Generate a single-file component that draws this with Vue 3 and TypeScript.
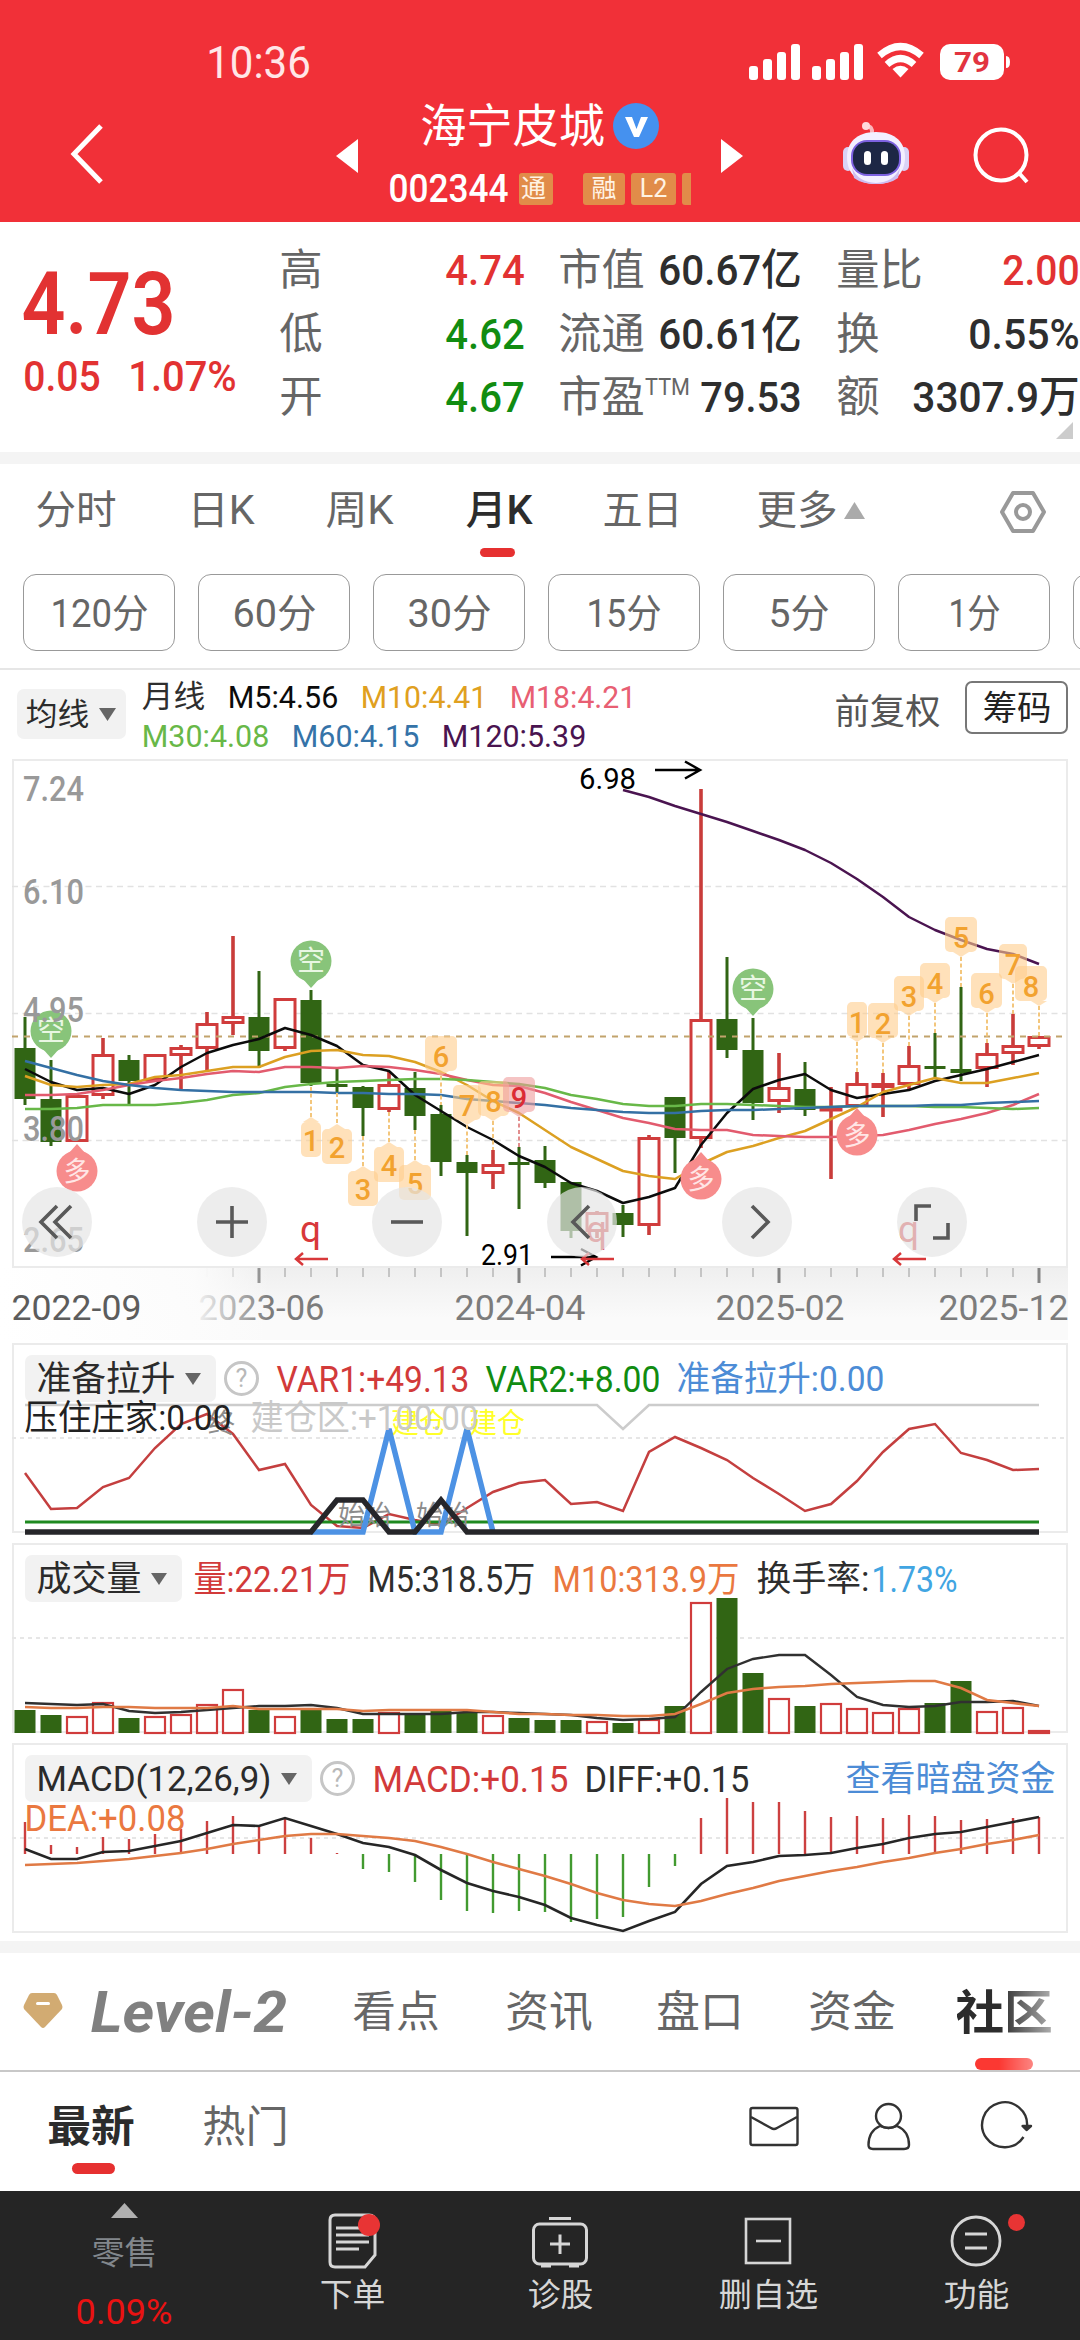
<script setup lang="ts">
import { h, type FunctionalComponent } from 'vue'

/* A line of real text set to a known width: s = font size, w = width of the ink */
const Fit: FunctionalComponent<{ t: string; w: number; s: number }> = (p) => {
  const lh = Math.round(p.s * 1.1)
  return h('svg', { class: 'fit', width: p.w, height: lh }, [
    h(
      'text',
      {
        x: -p.s * 0.04,
        y: lh / 2 + p.s * 0.36,
        'font-size': p.s,
        textLength: p.w + p.s * 0.08,
        lengthAdjust: 'spacingAndGlyphs',
        fill: 'currentColor',
      },
      p.t,
    ),
  ])
}
Fit.props = ['t', 'w', 's']

const STEP = 26
const X = (i: number) => 25 + STEP * i
const line = (ys: number[], from = 0) => ys.map((y, i) => `${X(i + from)},${y}`).join(' ')

const stats = [
  { a: '高', v: '4.74', c: 'red', b: '市值', bv: '60.67亿', bw: 140, d: '量比', dw: 83, dv: '2.00', dvw: 74, dc: 'red' },
  { a: '低', v: '4.62', c: 'green', b: '流通', bv: '60.61亿', bw: 140, d: '换', dw: 40, dv: '0.55%', dvw: 108, dc: 'dark' },
  { a: '开', v: '4.67', c: 'green', b: '市盈', bv: '79.53', bw: 98, d: '额', dw: 40, dv: '3307.9万', dvw: 164, dc: 'dark' },
]

const periods = [
  { t: '分时', w: 78 },
  { t: '日K', w: 64 },
  { t: '周K', w: 65 },
  { t: '月K', w: 64 },
  { t: '五日', w: 77 },
]
const minutes = [
  { t: '120分', w: 95 },
  { t: '60分', w: 81 },
  { t: '30分', w: 81 },
  { t: '15分', w: 72 },
  { t: '5分', w: 58 },
  { t: '1分', w: 49 },
]

/* wick top, wick bottom, body top, body bottom, rising */
type Candle = [number, number, number, number, 0 | 1]
const candles: Candle[] = [
  [1017, 1105, 1048, 1099, 0], [1060, 1146, 1099, 1142, 0], [1095, 1142, 1095, 1142, 1], [1038, 1099, 1054, 1096, 1],
  [1055, 1104, 1060, 1081, 0], [1054, 1081, 1054, 1081, 1], [1045, 1090, 1047, 1056, 1], [1012, 1070, 1023, 1049, 1],
  [936, 1035, 1016, 1024, 1], [971, 1068, 1017, 1051, 0], [998, 1051, 998, 1049, 1], [990, 1086, 1000, 1083, 0],
  [1069, 1092, 1084, 1087, 0], [1086, 1136, 1087, 1108, 0], [1071, 1112, 1084, 1110, 1], [1072, 1130, 1088, 1116, 0],
  [1105, 1176, 1114, 1162, 0], [1155, 1236, 1162, 1173, 0], [1150, 1189, 1164, 1174, 1], [1147, 1209, 1162, 1165, 0],
  [1146, 1188, 1160, 1183, 0], [1182, 1238, 1182, 1231, 0], [1211, 1238, 1212, 1232, 1], [1205, 1237, 1213, 1225, 0],
  [1135, 1235, 1137, 1226, 1], [1097, 1173, 1097, 1138, 0], [789, 1148, 1019, 1139, 1], [957, 1058, 1019, 1050, 0],
  [1018, 1120, 1050, 1103, 0], [1053, 1113, 1087, 1102, 1], [1062, 1116, 1089, 1110, 0], [1087, 1179, 1108, 1111, 1],
  [1072, 1107, 1083, 1107, 1], [1073, 1117, 1083, 1088, 1], [1046, 1090, 1065, 1085, 1], [1033, 1077, 1066, 1069, 0],
  [987, 1081, 1069, 1073, 0], [1043, 1087, 1053, 1069, 1], [1014, 1065, 1045, 1054, 1], [1036, 1049, 1036, 1047, 1],
]

const averages = [
  { c: '#4a1450', p: line([790, 797, 806, 814, 822, 831, 840, 850, 863, 879, 897, 917, 930, 940, 949, 954, 964], 23) },
  { c: '#0c0c0c', p: line([1069, 1082, 1090, 1088, 1094, 1085, 1067, 1053, 1045, 1039, 1028, 1035, 1046, 1065, 1071, 1095, 1111, 1127, 1140, 1156, 1167, 1183, 1191, 1203, 1197, 1188, 1145, 1113, 1089, 1080, 1074, 1090, 1098, 1094, 1090, 1081, 1075, 1069, 1062, 1055]) },
  { c: '#dca022', p: line([1076, 1085, 1087, 1085, 1084, 1077, 1075, 1071, 1067, 1067, 1057, 1051, 1050, 1055, 1056, 1062, 1072, 1085, 1101, 1113, 1130, 1147, 1159, 1171, 1176, 1179, 1164, 1152, 1146, 1138, 1131, 1119, 1107, 1092, 1085, 1078, 1083, 1083, 1078, 1073]) },
  { c: '#e25b6e', p: line([1095, 1095, 1094, 1090, 1085, 1081, 1078, 1074, 1071, 1072, 1067, 1067, 1068, 1066, 1067, 1070, 1074, 1080, 1085, 1086, 1093, 1102, 1110, 1118, 1123, 1129, 1130, 1130, 1135, 1136, 1137, 1137, 1136, 1135, 1130, 1124, 1119, 1113, 1105, 1094]) },
  { c: '#68b848', p: line([1109, 1109, 1108, 1105, 1105, 1105, 1103, 1100, 1095, 1093, 1087, 1084, 1082, 1081, 1080, 1079, 1079, 1080, 1082, 1084, 1088, 1095, 1099, 1104, 1106, 1106, 1104, 1104, 1105, 1106, 1107, 1107, 1106, 1106, 1106, 1107, 1107, 1108, 1109, 1108]) },
  { c: '#3470a4', p: line([1061, 1068, 1075, 1081, 1085, 1088, 1090, 1091, 1092, 1092, 1092, 1092, 1093, 1093, 1094, 1094, 1095, 1099, 1101, 1103, 1105, 1108, 1110, 1112, 1113, 1113, 1111, 1110, 1110, 1109, 1108, 1107, 1106, 1106, 1106, 1105, 1105, 1103, 1102, 1101]) },
]

const priceLabels = [
  { t: '7.24', y: 801 },
  { t: '6.10', y: 904 },
  { t: '4.95', y: 1022 },
  { t: '3.80', y: 1141 },
  { t: '2.65', y: 1252 },
]

/* Sequence counters: n, box left, box right, box top, stem x, far end of the stem; up = arrow on top */
interface Tag { n: string; l: number; r: number; t: number; x: number; e: number; up?: boolean; hot?: boolean }
const tags: Tag[] = [
  { n: '1', l: 301, r: 321, t: 1122, x: 311, e: 1087, up: true },
  { n: '2', l: 322, r: 352, t: 1129, x: 337, e: 1093, up: true },
  { n: '3', l: 348, r: 378, t: 1171, x: 363, e: 1136, up: true },
  { n: '4', l: 374, r: 404, t: 1147, x: 389, e: 1112, up: true },
  { n: '5', l: 399, r: 431, t: 1165, x: 415, e: 1130, up: true },
  { n: '6', l: 425, r: 457, t: 1036, x: 441, e: 1105 },
  { n: '7', l: 453, r: 481, t: 1085, x: 467, e: 1155 },
  { n: '8', l: 478, r: 509, t: 1081, x: 493, e: 1150 },
  { n: '9', l: 503, r: 535, t: 1077, x: 519, e: 1147, hot: true },
  { n: '1', l: 847, r: 867, t: 1002, x: 857, e: 1072 },
  { n: '2', l: 868, r: 898, t: 1003, x: 883, e: 1073 },
  { n: '3', l: 894, r: 924, t: 976, x: 909, e: 1046 },
  { n: '4', l: 920, r: 950, t: 963, x: 935, e: 1033 },
  { n: '5', l: 945, r: 977, t: 917, x: 961, e: 987 },
  { n: '6', l: 971, r: 1002, t: 973, x: 987, e: 1043 },
  { n: '7', l: 999, r: 1027, t: 944, x: 1013, e: 1014 },
  { n: '8', l: 1015, r: 1047, t: 966, x: 1039, e: 1036 },
]
const tagArrow = (g: Tag) =>
  g.up ? `M${g.x - 8} ${g.t}L${g.x} ${g.t - 5}L${g.x + 8} ${g.t}Z` : `M${g.x - 8} ${g.t + 35}L${g.x} ${g.t + 40}L${g.x + 8} ${g.t + 35}Z`

const greenPins = [[51, 1031], [311, 961], [753, 989]]
const redPins = [[77, 1171], [701, 1179], [857, 1135]]
const qMarks = [295, 581, 893]
const buttons = ['first', 'plus', 'minus', 'prev', 'next', 'full']
const buttonPaths: Record<string, string> = {
  first: 'M0 -16L-16 0L0 16M14 -16L-2 0L14 16',
  plus: 'M-16 0H16M0 -16V16',
  minus: 'M-16 0H16',
  prev: 'M7 -16L-9 0L7 16',
  next: 'M-5 -16L11 0L-5 16',
  full: 'M-16 -1V-16H-1M1 16H16V1',
}

const ticks = Array.from({ length: 33 }, (_, k) => k + 7)
const dates = [
  { t: '2022-09', w: 127 },
  { t: '2023-06', w: 123 },
  { t: '2024-04', w: 128 },
  { t: '2025-02', w: 126 },
  { t: '2025-12', w: 127 },
]

const liftLine = line([1473, 1509, 1508, 1487, 1478, 1448, 1424, 1414, 1434, 1470, 1464, 1505, 1526, 1528, 1514, 1520, 1525, 1508, 1492, 1483, 1480, 1504, 1502, 1511, 1452, 1437, 1448, 1460, 1478, 1494, 1511, 1504, 1481, 1452, 1429, 1424, 1453, 1460, 1470, 1469])

const volumes = [1710, 1715, 1716, 1702, 1718, 1716, 1714, 1704, 1689, 1710, 1716, 1710, 1719, 1719, 1712, 1713, 1711, 1712, 1715, 1718, 1720, 1720, 1721, 1723, 1719, 1706, 1602, 1598, 1673, 1698, 1706, 1703, 1708, 1712, 1708, 1703, 1681, 1711, 1707, 1730]
const volM5 = line([1703, 1704, 1705, 1704, 1711, 1713, 1712, 1710, 1708, 1706, 1706, 1705, 1708, 1714, 1714, 1714, 1714, 1712, 1712, 1713, 1714, 1715, 1718, 1720, 1719, 1717, 1692, 1669, 1659, 1655, 1655, 1675, 1697, 1705, 1707, 1706, 1702, 1702, 1701, 1706])
const volM10 = line([1707, 1708, 1708, 1707, 1707, 1708, 1708, 1708, 1706, 1709, 1709, 1709, 1709, 1711, 1710, 1710, 1710, 1710, 1712, 1714, 1714, 1715, 1715, 1716, 1716, 1714, 1704, 1693, 1689, 1687, 1686, 1684, 1683, 1682, 1681, 1681, 1688, 1700, 1703, 1706])

const macd = [1822, 1845, 1847, 1837, 1839, 1834, 1829, 1821, 1816, 1826, 1818, 1838, 1853, 1869, 1872, 1882, 1900, 1911, 1913, 1911, 1912, 1922, 1919, 1917, 1887, 1866, 1818, 1798, 1802, 1802, 1811, 1817, 1816, 1818, 1815, 1816, 1820, 1819, 1818, 1817]
const diff = line([1849, 1859, 1859, 1852, 1851, 1846, 1841, 1833, 1825, 1826, 1818, 1826, 1834, 1843, 1847, 1855, 1870, 1883, 1891, 1897, 1905, 1918, 1925, 1931, 1921, 1912, 1884, 1866, 1862, 1856, 1855, 1853, 1848, 1844, 1838, 1834, 1832, 1827, 1822, 1817])
const dea = line([1865, 1864, 1863, 1861, 1859, 1856, 1853, 1849, 1844, 1840, 1836, 1834, 1834, 1836, 1838, 1841, 1847, 1854, 1862, 1869, 1876, 1884, 1893, 1900, 1904, 1906, 1901, 1894, 1888, 1881, 1876, 1871, 1867, 1862, 1858, 1853, 1849, 1844, 1840, 1835])
</script>

<template>
  <div class="app">
    <header class="header">
      <div class="status">
        <Fit class="clock" t="10:36" :w="101" :s="45" />
        <svg class="status-icons" width="262" height="38" viewBox="0 0 262 38" fill="#fff">
          <g v-for="o in [0, 63]" :key="o">
            <rect :x="o" y="23" width="9" height="14" rx="3" />
            <rect :x="o + 14" y="16" width="9" height="21" rx="3" />
            <rect :x="o + 28" y="9" width="9" height="28" rx="3" />
            <rect :x="o + 42" y="1" width="9" height="36" rx="3" />
          </g>
          <g fill="none" stroke="#fff" stroke-width="7">
            <path d="M130.500 12.500Q151.500 -5.500 172.500 12.500" />
            <path d="M138 21.500Q151.500 9.500 165 21.500" />
          </g>
          <path d="M151.500 34.500L143.500 26Q151.500 19.500 159.500 26Z" />
          <rect x="191" y="1" width="64" height="36" rx="10" />
          <path d="M257 13Q261 13 261 19T257 25Z" />
          <text x="205" y="29" font-size="28" font-weight="700" textLength="36" lengthAdjust="spacingAndGlyphs" fill="#e23440">79</text>
        </svg>
      </div>
      <div class="nav">
        <svg class="back" width="36" height="62" viewBox="0 0 36 62"><path d="M32 3L5 31L32 59" fill="none" stroke="#fff" stroke-width="5" /></svg>
        <svg class="tri-l" width="22" height="34"><path d="M0 17L22 0V34Z" fill="#fff" /></svg>
        <div class="stock">
          <div class="stock-name">
            <Fit t="海宁皮城" :w="181" :s="46" />
            <svg width="46" height="46" viewBox="0 0 46 46"><circle cx="23" cy="23" r="23" fill="#4591ef" /><path d="M12 14H19L23.500 26L28 14H35L26 34H21Z" fill="#fff" /></svg>
          </div>
          <div class="stock-code">
            <Fit class="code" t="002344" :w="117" :s="39" />
            <span class="badge cut">通</span>
            <span class="badge fin">融</span>
            <span class="badge l2">L2</span>
            <span class="badge rest"></span>
          </div>
        </div>
        <svg class="tri-r" width="22" height="34"><path d="M22 17L0 0V34Z" fill="#fff" /></svg>
        <svg class="robot" width="68" height="64" viewBox="0 0 68 64">
          <path d="M30 12Q31 4 24 4" fill="none" stroke="#fbb6bc" stroke-width="4" stroke-linecap="round" />
          <circle cx="24" cy="4" r="4" fill="#ffd9dc" />
          <rect x="1" y="25" width="10" height="24" rx="5" fill="#d9d2f6" />
          <rect x="57" y="25" width="10" height="24" rx="5" fill="#d9d2f6" />
          <path d="M34 10C54 10 63 21 63 35C63 52 52 62 34 62S5 52 5 35C5 21 14 10 34 10Z" fill="#f3efff" />
          <path d="M10 46Q16 60 34 61Q52 60 58 46L56 56Q48 62 34 62T12 56Z" fill="#cdbcf0" />
          <rect x="9" y="18" width="50" height="36" rx="16" fill="#7d62e0" />
          <rect x="11" y="20" width="46" height="32" rx="14" fill="#1d2745" />
          <rect x="22" y="29" width="7" height="14" rx="3.500" fill="#fff" />
          <rect x="39" y="29" width="7" height="14" rx="3.500" fill="#fff" />
        </svg>
        <svg class="search" width="58" height="58" viewBox="0 0 58 58" fill="none" stroke="#fff" stroke-width="4"><circle cx="28" cy="28" r="25.500" /><path d="M46 46L54 55" /></svg>
      </div>
    </header>

    <section class="quote">
      <div class="price red">
        <Fit class="semi" t="4.73" :w="147" :s="87" />
        <div class="change">
          <Fit class="mid" t="0.05" :w="74" :s="43" />
          <Fit class="mid" t="1.07%" :w="105" :s="43" />
        </div>
      </div>
      <div class="stats">
        <div v-for="r in stats" :key="r.a" class="stat-row">
          <div class="cell one">
            <Fit class="gray" :t="r.a" :w="40" :s="43" />
            <Fit class="mid" :class="r.c" :t="r.v" :w="76" :s="43" />
          </div>
          <div class="cell two">
            <span class="pe">
              <Fit class="gray" :t="r.b" :w="83" :s="43" />
              <Fit v-if="r.b === '市盈'" class="gray ttm" t="TTM" :w="43" :s="24" />
            </span>
            <Fit class="mid dark" :t="r.bv" :w="r.bw" :s="43" />
          </div>
          <div class="cell three">
            <Fit class="gray" :t="r.d" :w="r.dw" :s="43" />
            <Fit class="mid" :class="r.dc" :t="r.dv" :w="r.dvw" :s="43" />
          </div>
        </div>
      </div>
      <svg class="corner" width="17" height="17"><path d="M17 0V17H0Z" fill="#ccc" /></svg>
    </section>

    <nav class="periods">
      <div v-for="p in periods" :key="p.t" class="period" :class="{ on: p.t === '月K' }">
        <Fit :t="p.t" :w="p.w" :s="40" />
        <i v-if="p.t === '月K'"></i>
      </div>
      <div class="period more">
        <Fit t="更多" :w="78" :s="40" />
        <svg width="21" height="17"><path d="M10.500 0L21 17H0Z" fill="#aaa" /></svg>
      </div>
      <svg class="hex" width="46" height="44" viewBox="0 0 46 44" fill="none" stroke="#999" stroke-width="4"><path d="M13 3H33L44 22L33 41H13L2 22Z" stroke-linejoin="round" /><circle cx="23" cy="22" r="7" /></svg>
    </nav>

    <div class="minutes">
      <div v-for="m in minutes" :key="m.t" class="pill"><Fit :t="m.t" :w="m.w" :s="39" /></div>
      <div class="pill"></div>
    </div>

    <div class="legend">
      <div class="drop small"><Fit t="均线" :w="61" :s="31" /><svg width="17" height="13"><path d="M0 0H17L8.500 13Z" fill="#666" /></svg></div>
      <div class="ma">
        <div class="ma-row">
          <Fit class="dark" t="月线" :w="61" :s="31" />
          <Fit class="k5" t="M5:4.56" :w="108" :s="32" />
          <Fit class="k10" t="M10:4.41" :w="124" :s="32" />
          <Fit class="k18" t="M18:4.21" :w="124" :s="32" />
        </div>
        <div class="ma-row">
          <Fit class="k30" t="M30:4.08" :w="125" :s="32" />
          <Fit class="k60" t="M60:4.15" :w="125" :s="32" />
          <Fit class="k120" t="M120:5.39" :w="142" :s="32" />
        </div>
      </div>
      <Fit class="adjust" t="前复权" :w="103" :s="35" />
      <div class="chips"><Fit t="筹码" :w="66" :s="34" /></div>
    </div>

    <section class="main-chart">
      <svg width="1080" height="520" viewBox="0 754 1080 520">
        <rect x="13" y="760" width="1054" height="507" fill="none" stroke="#ebebeb" stroke-width="2" />
        <path d="M12 886.500H1067M12 1013.500H1067M12 1140.500H1067" stroke="#e2e2e2" stroke-width="1.500" stroke-dasharray="6 4.500" />
        <g v-for="(k, i) in candles" :key="i">
          <template v-if="k[4]">
            <path v-if="k[0] < k[2] || k[1] > k[3]" :d="`M${X(i)} ${k[0]}V${k[2]}M${X(i)} ${k[3]}V${k[1]}`" stroke="#c93c3a" stroke-width="3.600" />
            <rect :x="X(i) - 10" :y="k[2] + 1.5" width="20" :height="Math.max(k[3] - k[2] - 3, 0.5)" fill="#fff" stroke="#d03c3c" stroke-width="3" />
          </template>
          <template v-else>
            <rect :x="X(i) - 1.5" :y="k[0]" width="3" :height="k[1] - k[0]" fill="#316514" />
            <rect :x="X(i) - 10.5" :y="k[2]" width="21" :height="k[3] - k[2]" fill="#316514" />
          </template>
        </g>
        <path d="M12 1036.500H1067" stroke="#c2a36c" stroke-width="2" stroke-dasharray="6 6" />
        <polyline v-for="a in averages" :key="a.c" :points="a.p" fill="none" :stroke="a.c" stroke-width="2.500" stroke-linejoin="round" />

        <g v-for="(p, i) in greenPins" :key="'g' + i" class="pin">
          <path :d="`M${p[0]} ${p[1] + 27}L${p[0] - 9} ${p[1] + 17}H${p[0] + 9}Z`" fill="#88c47a" />
          <circle :cx="p[0]" :cy="p[1]" r="20.500" fill="#88c47a" />
          <text :x="p[0]" :y="p[1] + 10" font-size="28" text-anchor="middle" fill="#e9f7e3">空</text>
        </g>
        <g v-for="(p, i) in redPins" :key="'r' + i" class="pin">
          <path :d="`M${p[0]} ${p[1] - 27}L${p[0] - 9} ${p[1] - 17}H${p[0] + 9}Z`" fill="#f78c8c" />
          <circle :cx="p[0]" :cy="p[1]" r="20.500" fill="#f78c8c" />
          <text :x="p[0]" :y="p[1] + 10" font-size="27" text-anchor="middle" fill="#ffe6e6">多</text>
        </g>

        <g v-for="(g, i) in tags" :key="'t' + i">
          <path :d="g.up ? `M${g.x} ${g.e}V${g.t - 5}` : `M${g.x} ${g.t + 40}V${g.e}`" :stroke="g.hot ? '#e28d8d' : '#f3c67c'" stroke-width="2" stroke-dasharray="4 2.500" />
          <g :fill="g.hot ? '#ee9c9c' : '#ffcd8c'" fill-opacity=".6">
            <rect :x="g.l" :y="g.t" :width="g.r - g.l" height="35" rx="5" />
            <path :d="tagArrow(g)" />
          </g>
          <text :x="(g.l + g.r) / 2" :y="g.t + (g.up ? 29 : 31)" font-size="29" font-weight="500" text-anchor="middle" :fill="g.hot ? '#dc2c34' : '#f2a22f'">{{ g.n }}</text>
        </g>

        <g class="axis-text">
          <text v-for="l in priceLabels" :key="l.t" x="23" :y="l.y" font-size="35" font-weight="500" textLength="61" lengthAdjust="spacingAndGlyphs" fill="#999">{{ l.t }}</text>
        </g>
        <text x="579" y="789" font-size="30" textLength="57" lengthAdjust="spacingAndGlyphs" fill="#000">6.98</text>
        <path d="M655 770H700M685 761.500L700 770L685 778.500" fill="none" stroke="#000" stroke-width="2.500" />
        <text x="481" y="1265" font-size="30" textLength="52" lengthAdjust="spacingAndGlyphs" fill="#000">2.91</text>
        <path d="M551 1257H596M581 1249L596 1257L581 1265.500" fill="none" stroke="#000" stroke-width="2.500" />
        <g v-for="q in qMarks" :key="q">
          <text :x="q + 5" y="1242" font-size="36" textLength="21" lengthAdjust="spacingAndGlyphs" fill="#d8383a">q</text>
          <path :d="`M${q + 33} 1259H${q + 1}M${q + 8} 1253L${q + 1} 1259L${q + 8} 1265`" fill="none" stroke="#d8383a" stroke-width="2.500" />
        </g>
        <g v-for="(b, i) in buttons" :key="b" :transform="`translate(${57 + 175 * i} 1222)`">
          <circle r="35" fill="#e5e5e5" fill-opacity=".7" />
          <path :d="buttonPaths[b]" fill="none" stroke="#595959" stroke-width="3.600" />
        </g>
      </svg>
    </section>

    <div class="timeline">
      <svg class="ticks" width="1080" height="18">
        <template v-for="k in ticks" :key="k">
          <rect v-if="k % 10 === 9" :x="X(k) - 1.5" y="0" width="3" height="15" fill="#858585" />
          <rect v-else :x="X(k) - 0.5" y="0" width="1" height="9" :fill="k === 7 ? '#ddd' : '#999'" />
        </template>
      </svg>
      <div class="dates">
        <Fit v-for="d in dates" :key="d.t" :t="d.t" :w="d.w" :s="35" />
      </div>
      <div class="fade"></div>
    </div>

    <section class="panel">
      <svg class="plot" width="1080" height="200" viewBox="0 1340 1080 200" fill="none">
        <rect x="13" y="1344" width="1054" height="188" stroke="#ebebeb" stroke-width="2" />
        <path d="M12 1438H1067" stroke="#e6e6e6" stroke-width="2" stroke-dasharray="4 4" />
        <path d="M25 1405H597L623 1429L649 1405H1039" stroke="#ccc" stroke-width="2.500" />
        <polyline :points="liftLine" stroke="#c43f3f" stroke-width="2.500" />
        <path d="M25 1522H1039" stroke="#1f8a20" stroke-width="3" />
        <g font-size="27" fill="#8c8c8c">
          <text x="338" y="1525">始</text><text x="364" y="1525">始</text><text x="416" y="1525">始</text><text x="442" y="1525">始</text>
          <text x="208" y="1433">终</text>
        </g>
        <g font-size="28" fill="#ffff2a">
          <text x="391" y="1433">建仓</text><text x="469" y="1433">建仓</text>
        </g>
        <path d="M311 1532H363L389 1429L415 1532H441L467 1429L493 1532" stroke="#4d92e4" stroke-width="5.500" />
        <path d="M25 1532H311L337 1500H363L389 1532H415L441 1500L467 1532H1039" stroke="#26262a" stroke-width="5.500" />
      </svg>
      <div class="panel-head">
        <div class="drop"><Fit t="准备拉升" :w="136" :s="35" /><svg width="16" height="12"><path d="M0 0H16L8 12Z" fill="#666" /></svg></div>
        <span class="help">?</span>
        <Fit class="red2" t="VAR1:+49.13" :w="190" :s="36" />
        <Fit class="green" t="VAR2:+8.00" :w="172" :s="36" />
        <Fit class="blue" t="准备拉升:0.00" :w="205" :s="35" />
      </div>
      <div class="second-line">
        <Fit class="black" t="压住庄家:0.00" :w="204" :s="35" />
        <Fit class="pale" t="建仓区:+100.00" :w="225" :s="35" />
      </div>
    </section>

    <section class="panel">
      <svg class="plot" width="1080" height="200" viewBox="0 1540 1080 200" fill="none">
        <rect x="13" y="1544" width="1054" height="188" stroke="#ebebeb" stroke-width="2" />
        <path d="M12 1638H1067" stroke="#e6e6e6" stroke-width="2" stroke-dasharray="4 4" />
        <g v-for="(v, i) in volumes" :key="i">
          <rect v-if="candles[i][4]" :x="X(i) - 10" :y="v + 1" width="20" :height="1732 - v" fill="#fff" stroke="#d03c3c" stroke-width="2.200" />
          <rect v-else :x="X(i) - 10.5" :y="v" width="21" :height="1733 - v" fill="#316514" />
        </g>
        <polyline :points="volM5" stroke="#303030" stroke-width="2.400" />
        <polyline :points="volM10" stroke="#e07a45" stroke-width="2.600" />
      </svg>
      <div class="panel-head vol">
        <div class="drop"><Fit t="成交量" :w="102" :s="35" /><svg width="16" height="12"><path d="M0 0H16L8 12Z" fill="#666" /></svg></div>
        <Fit class="red2" t="量:22.21万" :w="154" :s="36" />
        <Fit class="dark" t="M5:318.5万" :w="165" :s="36" />
        <Fit class="orange" t="M10:313.9万" :w="184" :s="36" />
        <span class="turn"><Fit class="dark" t="换手率:" :w="110" :s="35" /><Fit class="sky" t="1.73%" :w="83" :s="36" /></span>
      </div>
    </section>

    <section class="panel">
      <svg class="plot" width="1080" height="200" viewBox="0 1740 1080 200" fill="none">
        <rect x="13" y="1744" width="1054" height="188" stroke="#ebebeb" stroke-width="2" />
        <path d="M12 1838H1067" stroke="#e6e6e6" stroke-width="2" stroke-dasharray="4 4" />
        <path v-for="(m, i) in macd" :key="i" :d="`M${X(i)} 1854V${m}`" :stroke="m < 1854 ? '#cc4040' : '#429a30'" stroke-width="2.400" />
        <polyline :points="diff" stroke="#262626" stroke-width="2.600" />
        <polyline :points="dea" stroke="#e07a45" stroke-width="2.600" />
      </svg>
      <div class="panel-head">
        <div class="drop"><Fit t="MACD(12,26,9)" :w="232" :s="35" /><svg width="16" height="12"><path d="M0 0H16L8 12Z" fill="#666" /></svg></div>
        <span class="help">?</span>
        <Fit class="red2" t="MACD:+0.15" :w="193" :s="36" />
        <Fit class="dark" t="DIFF:+0.15" :w="162" :s="36" />
        <Fit class="blue link" t="查看暗盘资金" :w="207" :s="35" />
      </div>
      <div class="second-line"><Fit class="orange" t="DEA:+0.08" :w="158" :s="36" /></div>
    </section>

    <nav class="topics">
      <svg class="gem" width="40" height="36" viewBox="0 0 40 36"><path d="M9 0H31Q33 0 34 2L39 12Q40 14 39 16L22 34Q20 36 18 34L1 16Q0 14 1 12L6 2Q7 0 9 0Z" fill="#d2ab72" /><rect x="13" y="9" width="14" height="3" rx="1.500" fill="#fff" /></svg>
      <Fit class="level" t="Level-2" :w="192" :s="57" />
      <Fit t="看点" :w="84" :s="43" />
      <Fit t="资讯" :w="84" :s="43" />
      <Fit t="盘口" :w="84" :s="43" />
      <Fit t="资金" :w="84" :s="43" />
      <div class="active"><Fit t="社区" :w="94" :s="47" /><i></i></div>
    </nav>

    <div class="feed">
      <div class="feed-tab on"><Fit t="最新" :w="84" :s="43" /><i></i></div>
      <div class="feed-tab"><Fit t="热门" :w="83" :s="43" /></div>
      <svg class="feed-icons" width="284" height="50" viewBox="748 2101 284 50" fill="none" stroke="#333" stroke-width="2.400" stroke-linejoin="round">
        <rect x="750.500" y="2107" width="47" height="37" rx="2" />
        <path d="M751 2116L771 2127Q774 2129 777 2127L797 2116" />
        <ellipse cx="888.500" cy="2115" rx="12.500" ry="12" />
        <path d="M880 2125Q868.500 2130 868.500 2144Q868.500 2148 873 2148H904Q909 2148 909 2144Q909 2130 897 2125Q888.500 2129 880 2125Z" />
        <path d="M1023.500 2136A22.500 22.500 0 1 1 1027 2126" />
        <path d="M1022.500 2125H1031L1026.500 2129Z" fill="#333" />
      </svg>
    </div>

    <footer class="bar">
      <div class="bar-first">
        <svg width="27" height="15"><path d="M13.500 0L27 15H0Z" fill="#b0b0b0" /></svg>
        <Fit class="retail" t="零售" :w="63" :s="32" />
        <Fit class="pct" t="0.09%" :w="94" :s="35" />
      </div>
      <div class="bar-item">
        <svg width="60" height="58" viewBox="322 2211 60 58" fill="none" stroke="#d6d6d6" stroke-width="3">
          <path d="M335 2215H369Q375 2215 375 2221V2255L365 2267H335Q330 2267 330 2262V2220Q330 2215 335 2215Z" /><path d="M336 2228H362M336 2235H369M336 2242H369M336 2249H359" />
          <circle cx="369" cy="2225" r="11" fill="#e83434" stroke="none" />
        </svg>
        <Fit t="下单" :w="63" :s="32" />
      </div>
      <div class="bar-item">
        <svg width="60" height="58" viewBox="530 2211 60 58" fill="none" stroke="#d6d6d6" stroke-width="3">
          <rect x="533.500" y="2224" width="53" height="40" rx="6" /><path d="M549 2218.500H571M550 2244H570M560 2234.500V2254M541 2266H551M569 2266H579" />
        </svg>
        <Fit t="诊股" :w="63" :s="32" />
      </div>
      <div class="bar-item">
        <svg width="60" height="58" viewBox="738 2211 60 58" fill="none" stroke="#d6d6d6" stroke-width="2.600">
          <rect x="746" y="2219" width="44" height="44" /><path d="M756 2241H781" />
        </svg>
        <Fit t="删自选" :w="97" :s="32" />
      </div>
      <div class="bar-item">
        <svg width="60" height="58" viewBox="946 2211 60 58" fill="none" stroke="#d6d6d6" stroke-width="2.800">
          <circle cx="976" cy="2241" r="24" /><path d="M965 2234H987M965 2248H987" />
          <circle cx="1016.500" cy="2222.500" r="8.500" fill="#e83434" stroke="none" />
        </svg>
        <Fit t="功能" :w="63" :s="32" />
      </div>
    </footer>
  </div>
</template>

<style>
body {
  margin: 0;
  background: #fff;
}
</style>

<style scoped>
.app {
  width: 1080px;
  height: 2340px;
  overflow: hidden;
  background: #fff;
  color: #666;
  font-family: Roboto, 'Noto Sans CJK SC', sans-serif;
  font-weight: 400;
  display: flex;
  flex-direction: column;
}
.app > * {
  flex: none;
  box-sizing: border-box;
}
svg {
  display: block;
  flex: none;
  overflow: visible;
}
i {
  display: block;
  background: #e63030;
}
.mid { font-weight: 500; }
.semi { font-weight: 600; }
.red { color: #e23232; }
.red2 { color: #d23a3a; }
.green { color: #118c11; }
.dark { color: #2e2e2e; }
.black { color: #222; }
.gray { color: #666; }
.blue { color: #4c8cd6; }
.sky { color: #41a5e2; }
.orange { color: #ea7840; }
.pale { color: #c9c9c9; }

/* header */
.header {
  height: 222px;
  background: #f13038;
  color: #fff;
}
.status {
  height: 90px;
  padding: 43px 69.500px 0 208px;
  box-sizing: border-box;
  display: flex;
  justify-content: space-between;
}
.clock {
  color: #ffe6e7;
  margin-top: -6px;
}
.nav {
  display: flex;
  align-items: flex-start;
  padding-left: 69px;
}
.back { margin-top: 33px; }
.tri-l { margin: 49px 0 0 231px; }
.tri-r { margin: 49px 0 0 30px; }
.stock {
  width: 301px;
  margin-left: 32px;
}
.stock-name {
  display: flex;
  align-items: center;
  gap: 10px;
  margin: 10px 0 0 32px;
}
.stock-code {
  display: flex;
  align-items: center;
  margin-top: 17px;
}
.code { font-weight: 500; margin: -2px 12px 0 0; }
.badge {
  height: 32px;
  border-radius: 3px;
  background: #e18c49;
  color: #fff3e4;
  font-size: 25px;
  line-height: 31px;
  text-align: center;
  flex: none;
}
.cut { width: 34px; margin-right: 30px; text-indent: -5px; }
.fin { width: 42px; margin-right: 6px; }
.l2 { width: 45px; margin-right: 6px; }
.rest { width: 9px; border-radius: 3px 0 0 3px; }
.robot { margin: 32px 0 0 99px; }
.search { margin: 37px 0 0 63px; }

/* quote */
.quote {
  height: 242px;
  border-bottom: 12px solid #f4f4f4;
  display: flex;
  position: relative;
}
.price {
  width: 281px;
  padding: 33px 0 0 25px;
  box-sizing: border-box;
}
.change {
  display: flex;
  gap: 31px;
  margin-top: 1px;
}
.stats { padding-top: 24px; }
.stat-row {
  display: flex;
  height: 47px;
  margin-bottom: 16.500px;
}
.cell {
  display: flex;
  justify-content: space-between;
}
.one { width: 242px; }
.two { width: 240px; margin-left: 37px; }
.three { width: 240px; margin-left: 38px; }
.pe { display: flex; gap: 3px; }
.corner {
  position: absolute;
  right: 7px;
  bottom: 13px;
}

/* period tabs */
.periods {
  height: 110px;
  padding: 24px 0 0 37px;
  display: grid;
  grid-template-columns: 152px 138px 140px 137px 154px 243px auto;
  align-items: start;
}
.period { width: max-content; }
.on { color: #2c2c2c; font-weight: 500; }
.period i {
  width: 35px;
  height: 9px;
  border-radius: 5px;
  margin: 16px auto 0;
  transform: translateX(-2px);
}
.more { display: flex; gap: 8px; align-items: center; }
.hex { margin-top: 2px; margin-left: -1px; }

.minutes {
  height: 96px;
  padding-left: 23px;
  display: flex;
  gap: 23px;
  overflow: hidden;
  border-bottom: 2px solid #e6e6e6;
}
.pill {
  flex: none;
  box-sizing: border-box;
  width: 152px;
  height: 77px;
  border: 1.500px solid #999;
  border-radius: 13px;
  display: flex;
  align-items: center;
  justify-content: center;
}

/* moving average legend */
.legend {
  height: 84px;
  display: flex;
  padding: 0 12px 0 17px;
}
.drop {
  display: flex;
  align-items: center;
  gap: 11px;
  height: 47px;
  padding: 0 15px 0 13px;
  border-radius: 7px;
  background: #f2f2f2;
  color: #2b2b2b;
}
.small {
  height: 50px;
  margin-top: 19px;
  padding: 0 10px;
  gap: 11px;
}
.ma { margin: 9px 0 0 17px; }
.ma-row { display: flex; gap: 25px; height: 39px; }
.k5 { color: #0b0b0b; }
.k10 { color: #e0a020; }
.k18 { color: #e85f73; }
.k30 { color: #68b848; }
.k60 { color: #3573a8; }
.k120 { color: #4a1450; }
.adjust { margin: 22px 26px 0 auto; color: #555; }
.chips {
  width: 103px;
  height: 53px;
  box-sizing: border-box;
  margin-top: 11px;
  border: 2px solid #777;
  border-radius: 7px;
  color: #222;
  display: flex;
  align-items: center;
  justify-content: center;
}

.main-chart { height: 514px; }

/* time axis */
.timeline {
  height: 72px;
  position: relative;
  background: linear-gradient(#efefef, #fafafa 70%);
  width: 1068px;
}
.ticks { height: 18px; }
.dates {
  display: flex;
  padding: 2px 0 0 13px;
  color: #7c7c7c;
}
.dates > :nth-child(1) { margin-right: 60px; position: relative; z-index: 1; color: #5c5c5c; }
.dates > :nth-child(2) { margin-right: 133px; }
.dates > :nth-child(3) { margin-right: 133px; }
.dates > :nth-child(4) { margin-right: 97px; }
.fade {
  position: absolute;
  left: 0;
  top: 0;
  width: 270px;
  height: 72px;
  background: linear-gradient(90deg, #fff, rgba(252, 252, 252, 0.95) 72%, rgba(250, 250, 250, 0));
}

/* indicator panels */
.panel {
  height: 200px;
  position: relative;
}
.plot {
  position: absolute;
  left: 0;
  top: 0;
}
.panel-head {
  position: relative;
  display: flex;
  align-items: center;
  gap: 19px;
  height: 47px;
  padding: 15px 26px 0 25px;
}
.panel-head .drop { margin-right: -11px; }
.vol { gap: 20px; }
.vol .drop { margin-right: -7px; }
.help {
  box-sizing: border-box;
  width: 35px;
  height: 35px;
  border: 3px solid #c6c6c6;
  border-radius: 50%;
  color: #b8b8b8;
  font-size: 25px;
  line-height: 29px;
  text-align: center;
}
.turn { display: flex; gap: 5px; }
.link { margin-left: auto; }
.second-line {
  position: relative;
  display: flex;
  gap: 22px;
  padding: 0 0 0 26px;
  margin-top: -4px;
}

/* topic tabs */
.topics {
  height: 131px;
  border-top: 12px solid #f4f4f4;
  border-bottom: 2px solid #c8c8c8;
  padding: 0 0 0 23px;
  margin-top: 1px;
  display: grid;
  grid-template-columns: 70px 261px 153px 151px 152px 147px auto;
  align-items: center;
}
.gem { margin-bottom: 2px; }
.level {
  font-weight: 700;
  font-style: italic;
  color: #808080;
}
.active {
  font-weight: 700;
  align-self: end;
  width: 94px;
  color: #2c2c2c;
  -webkit-mask-image: linear-gradient(90deg, #000 45%, rgba(0, 0, 0, 0.4));
  mask-image: linear-gradient(90deg, #000 45%, rgba(0, 0, 0, 0.4));
}
.active i {
  width: 58px;
  height: 12px;
  border-radius: 6px;
  margin: 20px 0 0 18px;
  background: #fb3832;
}

/* feed tabs */
.feed {
  height: 119px;
  display: flex;
  padding: 31px 48px 0 49px;
}
.feed-tab { width: 155px; }
.feed-tab.on { font-weight: 700; }
.feed-tab i {
  width: 43px;
  height: 11px;
  border-radius: 6px;
  margin: 13px 0 0 23px;
}
.feed-icons { margin-left: auto; margin-top: -1px; }

/* bottom bar */
.bar {
  height: 149px;
  background: #252525;
  display: flex;
  color: #d6d6d6;
}
.bar-first {
  width: 248px;
  display: flex;
  flex-direction: column;
  align-items: center;
  padding-top: 12px;
  box-sizing: border-box;
}
.bar-item {
  width: 208px;
  display: flex;
  flex-direction: column;
  align-items: center;
  gap: 8px;
  padding-top: 20px;
  box-sizing: border-box;
}
.retail { color: #82878c; margin-top: 17px; }
.pct { color: #ea1212; margin-top: 22px; }
</style>
